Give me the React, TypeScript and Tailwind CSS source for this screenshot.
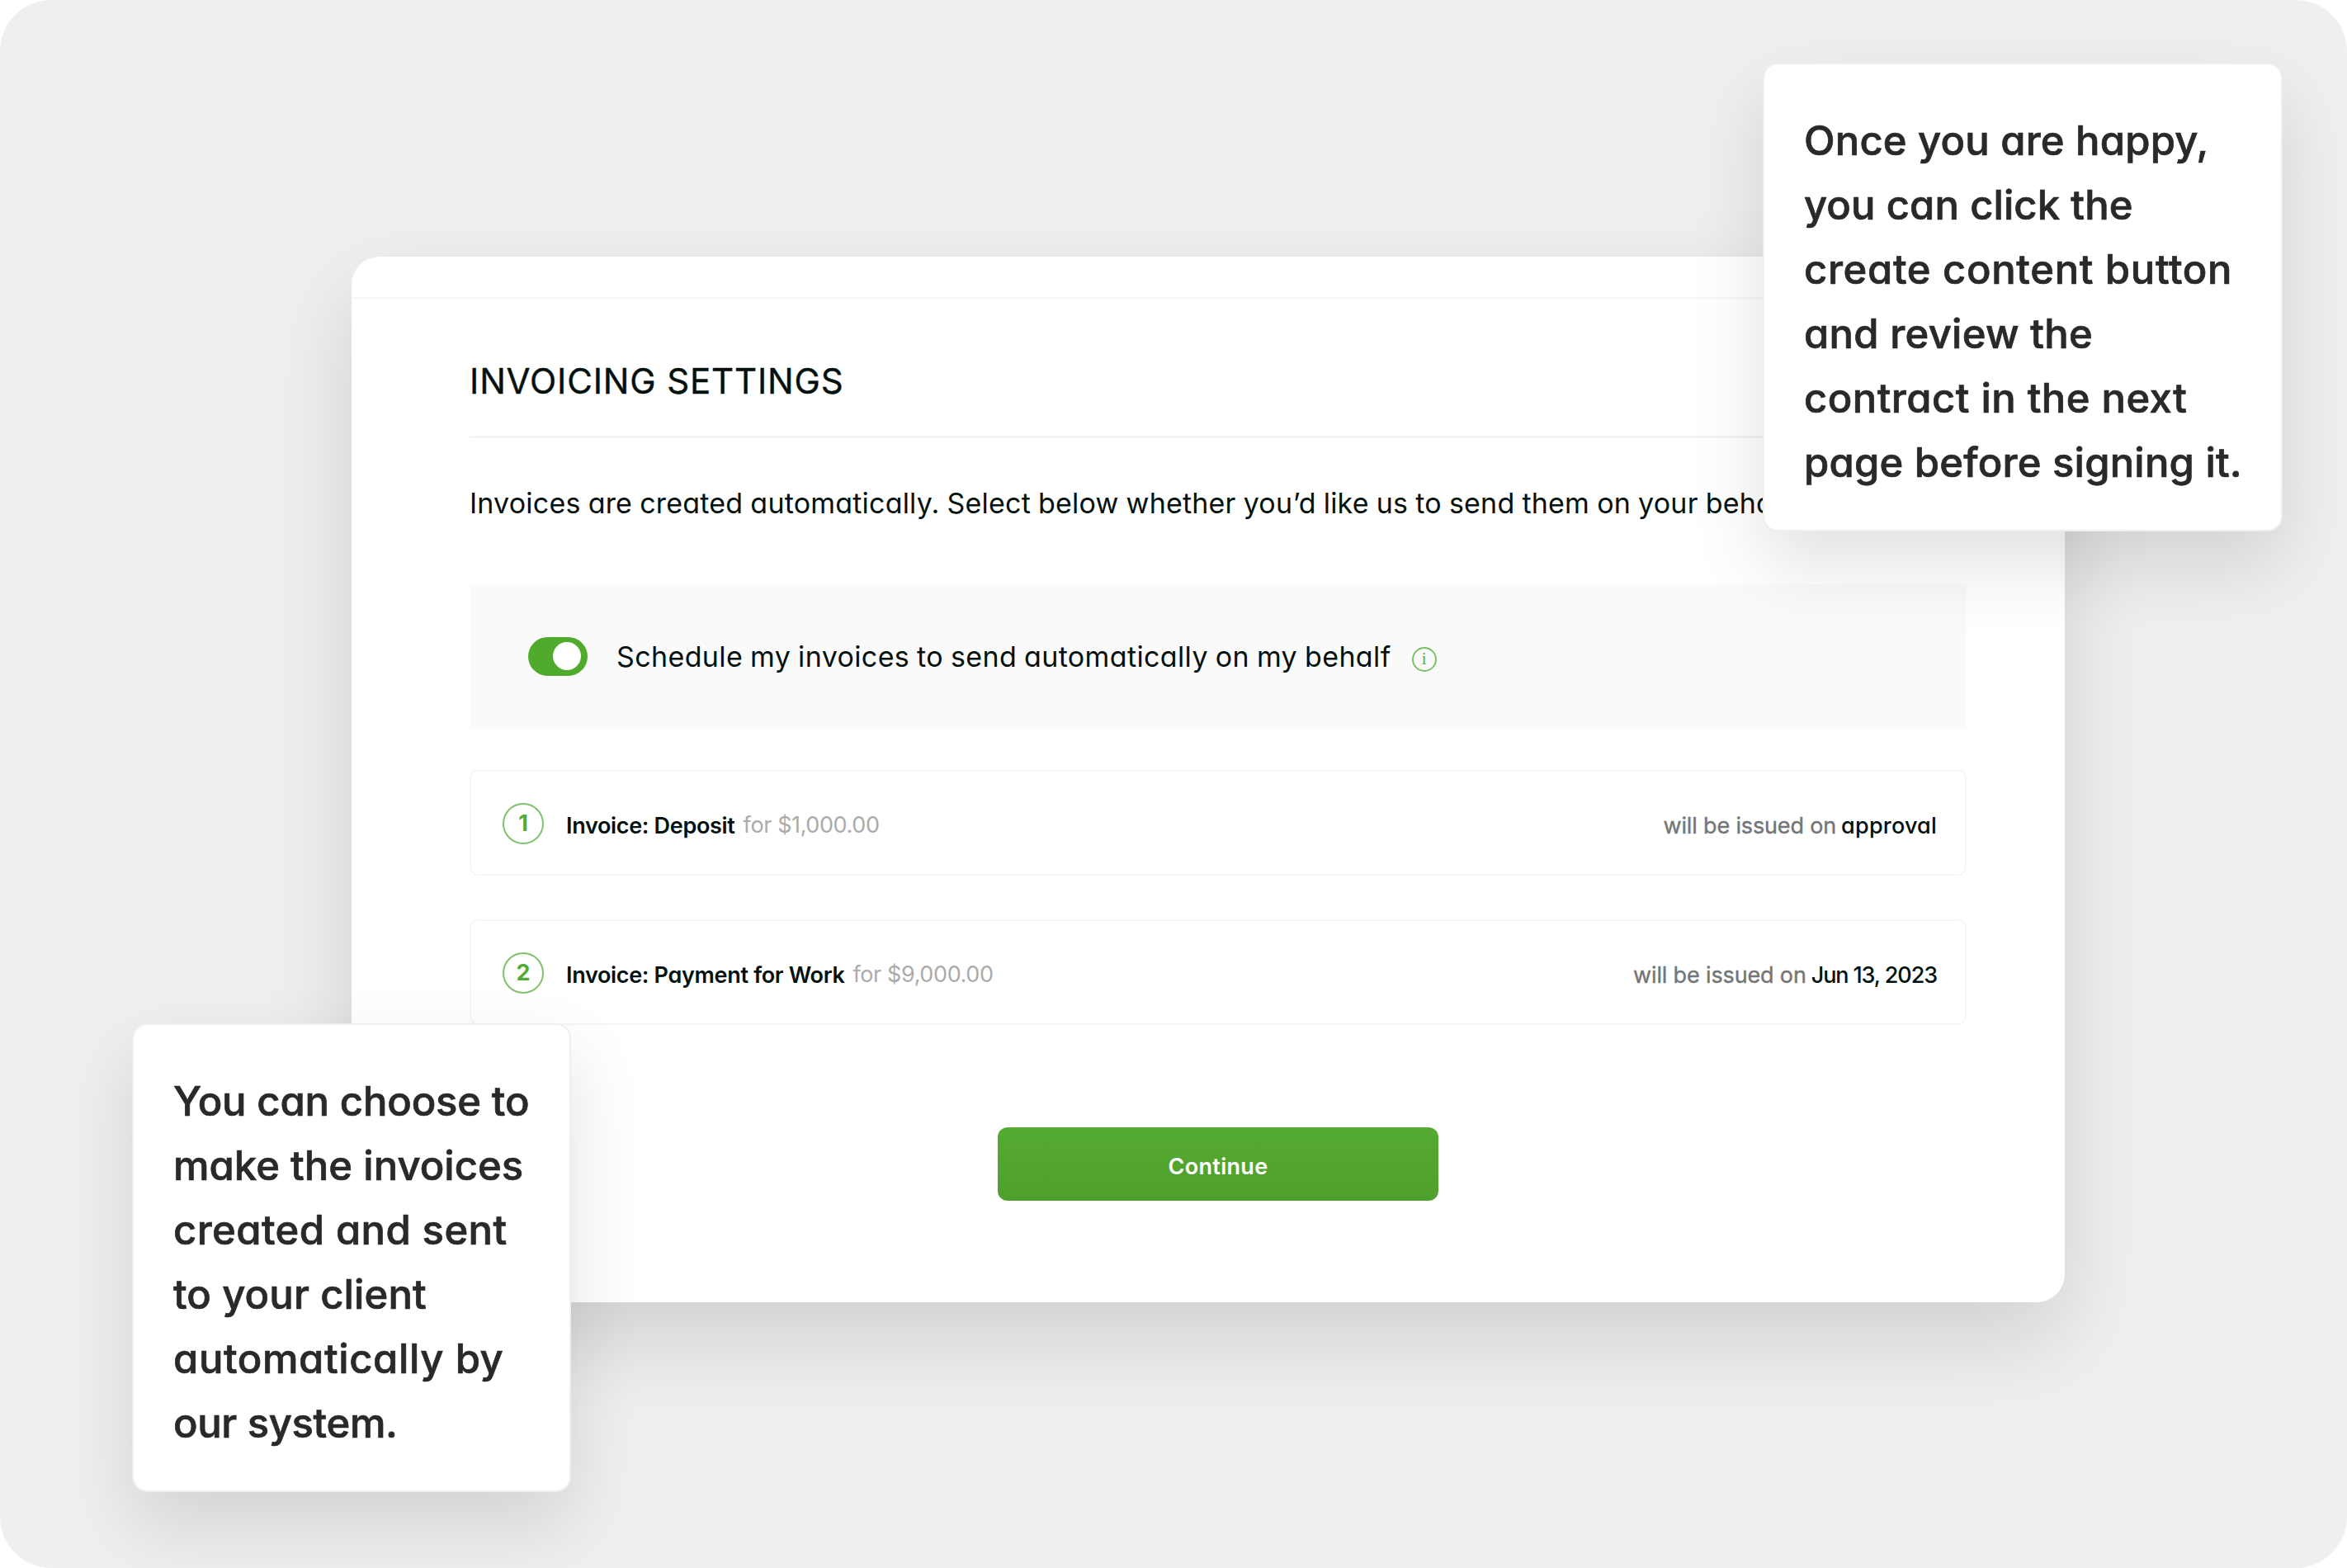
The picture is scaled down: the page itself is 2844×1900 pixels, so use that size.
interface CalloutLine {
  text: string;
  tracking: string;
}

interface Invoice {
  number: number;
  name: string;
  amount: string;
  due: string;
  dueTracking: string;
}

const reviewLines: CalloutLine[] = [
  { text: "Once you are happy,", tracking: "tracking-[0.18px]" },
  { text: "you can click the", tracking: "tracking-[0.08px]" },
  { text: "create content button", tracking: "tracking-[0.66px]" },
  { text: "and review the", tracking: "tracking-[0.28px]" },
  { text: "contract in the next", tracking: "tracking-[0.45px]" },
  { text: "page before signing it.", tracking: "tracking-[0.2px]" },
];

const scheduleLines: CalloutLine[] = [
  { text: "You can choose to", tracking: "tracking-[-0.16px]" },
  { text: "make the invoices", tracking: "tracking-[0.03px]" },
  { text: "created and sent", tracking: "tracking-[0.4px]" },
  { text: "to your client", tracking: "tracking-[0.12px]" },
  { text: "automatically by", tracking: "tracking-[0.6px]" },
  { text: "our system.", tracking: "tracking-[-0.35px]" },
];

const invoices: Invoice[] = [
  {
    number: 1,
    name: "Invoice: Deposit",
    amount: "$1,000.00",
    due: "approval",
    dueTracking: "tracking-[0.2px]",
  },
  {
    number: 2,
    name: "Invoice: Payment for Work",
    amount: "$9,000.00",
    due: "Jun 13, 2023",
    dueTracking: "tracking-[-1.1px]",
  },
];

const Callout = ({ lines, className }: { lines: CalloutLine[]; className: string }) => {
  return (
    <div
      className={`absolute rounded-[18px] border-2 border-[#edf0ee] bg-white bg-clip-padding pl-[48px] pt-[54px] text-[49px] font-medium leading-[78px] text-[#282a2a] shadow-[0_40px_90px_rgba(0,0,0,0.12)] [-webkit-text-stroke:0.7px_#282a2a] ${className}`}
    >
      {lines.map((line) => (
        <div key={line.text} className={`whitespace-nowrap ${line.tracking}`}>
          {line.text}
        </div>
      ))}
    </div>
  );
};

const InvoiceRow = ({ invoice }: { invoice: Invoice }) => {
  return (
    <div className="flex h-32 items-center rounded-[10px] border-2 border-[#f5f6f6] pl-[38px] pr-[34px] text-[27px] leading-10">
      <div className="mt-[2px] flex size-[50px] shrink-0 items-center justify-center rounded-full border-2 border-[#7fc26c] font-bold text-[#52ab36]">
        {invoice.number}
      </div>
      <div className="ml-[27px] pt-[8px] font-semibold tracking-[-0.32px] text-[#05110e]">
        {invoice.name}
      </div>
      <div className="ml-[10px] pt-[5px] tracking-[-0.4px] text-[#ababab]">
        for {invoice.amount}
      </div>
      <div className="ml-auto flex gap-[6px] pt-[7px]">
        <span className="tracking-[-0.15px] text-[#757575] [-webkit-text-stroke:0.4px_#757575]">
          will be issued on
        </span>
        <span className={`font-medium text-[#05110e] ${invoice.dueTracking}`}>{invoice.due}</span>
      </div>
    </div>
  );
};

const SettingsCard = () => {
  return (
    <section className="h-[1267px] w-[2076px] rounded-[34px] bg-white pr-[119px] shadow-[0_45px_105px_rgba(0,0,0,0.13)]">
      <div className="-mr-[119px] h-[51px] border-b-2 border-[#f6f7f7]" />

      <div className="ml-[143px] pt-[75px]">
        <h2 className="border-b-[3px] border-[#f3f4f4] pb-[41px] text-[42px] leading-[50px] tracking-[0.85px] text-[#05110e] [-webkit-text-stroke:0.4px_#05110e]">
          INVOICING SETTINGS
        </h2>

        <p className="mt-[54px] whitespace-nowrap text-[34px] leading-[50px] tracking-[0.2px] text-[#05110e] [word-spacing:-0.7px]">
          Invoices are created automatically. Select below whether you’d like us to send them on your
          behalf.
        </p>

        <div className="mt-[73px] flex h-44 items-center bg-[#fafafa] pl-[71px]">
          <div className="-mt-[2px] flex h-[47px] w-[72px] items-center justify-end rounded-full bg-[#50ab2c] pr-[8px]">
            <div className="size-[34px] rounded-full bg-white" />
          </div>
          <span className="ml-[35px] text-[34px] leading-[50px] tracking-[0.37px] text-[#05110e] [word-spacing:-1px]">
            Schedule my invoices to send automatically on my behalf
          </span>
          <span className="ml-[25px] mt-[5px] flex size-[30px] items-center justify-center rounded-full border-2 border-[#7cc168] font-['Liberation_Serif',serif] text-[21px] leading-none text-[#5bb044]">
            i
          </span>
        </div>

        <div className="mt-[49px] flex flex-col gap-[53px]">
          {invoices.map((invoice) => (
            <InvoiceRow key={invoice.number} invoice={invoice} />
          ))}
        </div>

        <button className="mx-auto mt-[124px] flex h-[89px] w-[534px] items-center justify-center rounded-xl bg-linear-to-b from-[#55ab31] to-[#4f9f2d] pt-[7px] text-[27px] font-semibold tracking-[0.3px] text-white">
          Continue
        </button>
      </div>
    </section>
  );
};

const App = () => {
  return (
    <div className="h-[1900px] w-[2844px] bg-white">
      <main className="relative h-full overflow-hidden rounded-[62px] bg-[#edf0ec] pl-[426px] pt-[311px] font-['Inter',sans-serif] [font-feature-settings:'cv11']">
        <SettingsCard />
        <Callout lines={reviewLines} className="left-[2136px] top-[76px] h-[568px] w-[630px]" />
        <Callout lines={scheduleLines} className="left-[160px] top-[1240px] h-[568px] w-[532px]" />
      </main>
    </div>
  );
};

export default App;
